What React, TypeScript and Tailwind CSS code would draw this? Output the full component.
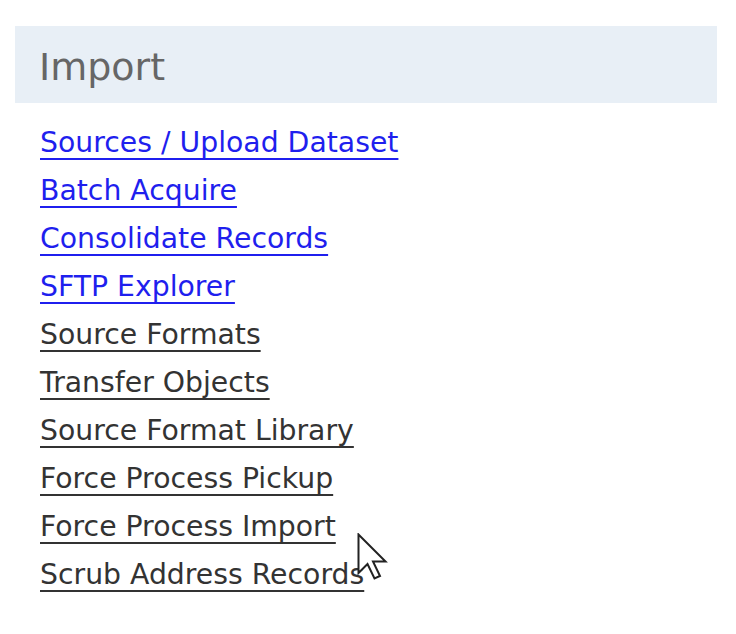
const links = [
  { label: "Sources / Upload Dataset", active: true },
  { label: "Batch Acquire", active: true },
  { label: "Consolidate Records", active: true },
  { label: "SFTP Explorer", active: true },
  { label: "Source Formats", active: false },
  { label: "Transfer Objects", active: false },
  { label: "Source Format Library", active: false },
  { label: "Force Process Pickup", active: false },
  { label: "Force Process Import", active: false },
  { label: "Scrub Address Records", active: false },
];

function Cursor() {
  return (
    <svg
      className="absolute left-[357px] top-[533px]"
      width="34"
      height="48"
      viewBox="0 0 34 48"
      fill="none"
    >
      <path
        d="M1.5 1.5 L1.5 40 L10.5 31 L17.5 45.5 L23 43 L16 28.5 L28.5 28.5 Z"
        fill="#ffffff"
        stroke="#222"
        strokeWidth="2"
        strokeLinejoin="miter"
      />
    </svg>
  );
}

export default function App() {
  return (
    <div className="relative w-[736px] h-[634px] bg-white font-['DejaVu_Sans',sans-serif]">
      <div className="pt-[26px] pl-[15px] w-[717px]">
        {/* Section header */}
        <div className="h-[77px] bg-[#e8eff6] pl-[24px] pt-[3px] text-[38px] leading-[77px] text-[#666]">
          Import
        </div>

        {/* Links */}
        <ul className="mt-[16px] pl-[25px]">
          {links.map((l) => (
            <li key={l.label} className="h-[48px] text-[28.3px] leading-[48px]">
              <a
                href="#"
                className={
                  "underline decoration-2 underline-offset-[6px] " +
                  (l.active ? "text-[#1f1fee]" : "text-[#333]")
                }
              >
                {l.label}
              </a>
            </li>
          ))}
        </ul>
      </div>
      <Cursor />
    </div>
  );
}
